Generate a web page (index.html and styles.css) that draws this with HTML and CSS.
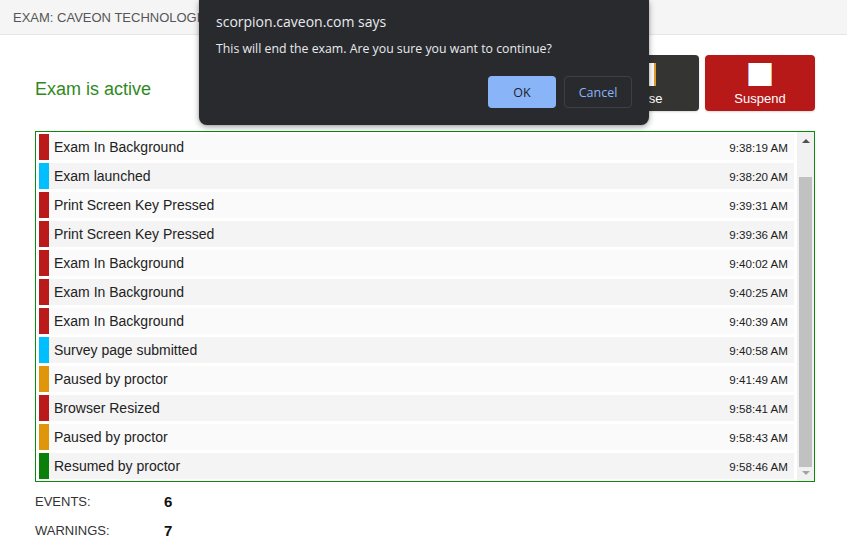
FILE: index.html
```html
<!DOCTYPE html>
<html lang="en">
<head>
<meta charset="utf-8">
<title>Exam monitor</title>
<link rel="stylesheet" href="styles.css">
</head>
<body>
<header class="topbar">
  <span class="exam-title">EXAM: CAVEON TECHNOLOGIES SECURITY EXAM</span>
</header>
<main class="content">
  <div class="status-row">
    <div class="status">Exam is active</div>
    <div class="actions">
      <button class="act act-pause"><span class="act-icon"></span><span class="act-label">Pause</span></button>
      <button class="act act-suspend"><span class="act-icon"></span><span class="act-label">Suspend</span></button>
    </div>
  </div>
  <div class="log">
    <div class="rows">
      <div class="row"><span class="bar red"></span><span class="ev">Exam In Background</span><span class="time">9:38:19 AM</span></div>
      <div class="row"><span class="bar blue"></span><span class="ev">Exam launched</span><span class="time">9:38:20 AM</span></div>
      <div class="row"><span class="bar red"></span><span class="ev">Print Screen Key Pressed</span><span class="time">9:39:31 AM</span></div>
      <div class="row"><span class="bar red"></span><span class="ev">Print Screen Key Pressed</span><span class="time">9:39:36 AM</span></div>
      <div class="row"><span class="bar red"></span><span class="ev">Exam In Background</span><span class="time">9:40:02 AM</span></div>
      <div class="row"><span class="bar red"></span><span class="ev">Exam In Background</span><span class="time">9:40:25 AM</span></div>
      <div class="row"><span class="bar red"></span><span class="ev">Exam In Background</span><span class="time">9:40:39 AM</span></div>
      <div class="row"><span class="bar blue"></span><span class="ev">Survey page submitted</span><span class="time">9:40:58 AM</span></div>
      <div class="row"><span class="bar orange"></span><span class="ev">Paused by proctor</span><span class="time">9:41:49 AM</span></div>
      <div class="row"><span class="bar red"></span><span class="ev">Browser Resized</span><span class="time">9:58:41 AM</span></div>
      <div class="row"><span class="bar orange"></span><span class="ev">Paused by proctor</span><span class="time">9:58:43 AM</span></div>
      <div class="row"><span class="bar green"></span><span class="ev">Resumed by proctor</span><span class="time">9:58:46 AM</span></div>
    </div>
    <div class="scrollbar">
      <span class="arrow arrow-up"></span>
      <div class="track"><div class="thumb"></div></div>
      <span class="arrow arrow-down"></span>
    </div>
  </div>
  <div class="stats">
    <div class="stat"><span class="stat-label">EVENTS:</span><span class="stat-value">6</span></div>
    <div class="stat"><span class="stat-label">WARNINGS:</span><span class="stat-value">7</span></div>
  </div>
</main>
<div class="dialog">
  <div class="dialog-title">scorpion.caveon.com says</div>
  <div class="dialog-msg">This will end the exam. Are you sure you want to continue?</div>
  <div class="dialog-btns">
    <button class="dbtn dbtn-ok">OK</button>
    <button class="dbtn dbtn-cancel">Cancel</button>
  </div>
</div>
</body>
</html>
```
FILE: styles.css
```css
html, body {
  margin: 0;
  padding: 0;
  background: #ffffff;
  font-family: "Liberation Sans", Arial, sans-serif;
  color: #222;
}

.topbar {
  height: 34px;
  background: #f5f5f5;
  border-bottom: 1px solid #e6e6e6;
  display: flex;
  align-items: center;
  padding-left: 13px;
  overflow: hidden;
  white-space: nowrap;
}

.exam-title {
  font-size: 13px;
  color: #555;
}

.content {
  padding: 20px 32px 0 35px;
}

.status-row {
  display: flex;
  align-items: center;
  justify-content: space-between;
  height: 56px;
}

.status {
  font-size: 18px;
  color: #2f8a1d;
  margin-top: 12px;
}

.actions {
  display: flex;
  gap: 6px;
  height: 56px;
}

.act {
  width: 110px;
  height: 56px;
  border: none;
  border-radius: 4px;
  display: flex;
  flex-direction: column;
  align-items: center;
  padding: 8px 0 0;
  color: #fff;
  font-family: "Liberation Sans", Arial, sans-serif;
  font-size: 13px;
  box-shadow: 0 1px 2px rgba(0,0,0,0.15);
}

.act-icon {
  display: block;
  width: 24px;
  height: 23px;
  background: #fff;
  box-sizing: border-box;
}

.act-label {
  display: block;
  margin-top: 5px;
  line-height: 15px;
}

.act-pause {
  background: #343432;
}

.act-pause .act-icon {
  border-right: 2px solid #e09a2a;
}

.act-suspend {
  background: #b71818;
}

.act-suspend .act-icon {
  border-left: 1px solid #b6a0ff;
  border-right: 1px solid #f5b060;
}

.log {
  margin-top: 20px;
  border: 1px solid #0a8a0a;
  height: 349px;
  display: flex;
}

.rows {
  flex: 1;
  padding: 2px 3px 0 3px;
  display: flex;
  flex-direction: column;
  gap: 3px;
}

.row {
  height: 26px;
  display: flex;
  align-items: center;
  background: #fafafa;
}

.row:nth-child(even) {
  background: #f4f4f4;
}

.bar {
  width: 10px;
  align-self: stretch;
}

.bar.red { background: #bb1a1a; }
.bar.blue { background: #00bfff; }
.bar.orange { background: #e0960b; }
.bar.green { background: #0a800a; }

.ev {
  padding-left: 5px;
  font-size: 14px;
  color: #222;
}

.time {
  margin-left: auto;
  padding-right: 6px;
  font-size: 11.6px;
  color: #222;
}

.scrollbar {
  width: 17px;
  background: #f1f1f1;
  display: flex;
  flex-direction: column;
  align-items: center;
}

.arrow {
  display: block;
  width: 0;
  height: 0;
  border-left: 4px solid transparent;
  border-right: 4px solid transparent;
}

.arrow-up {
  margin-top: 7px;
  margin-bottom: 6px;
  border-bottom: 4px solid #505050;
}

.arrow-down {
  margin-top: 4px;
  margin-bottom: 6px;
  border-top: 4px solid #a3a3a3;
}

.track {
  flex: 1;
  width: 100%;
  display: flex;
  flex-direction: column;
  justify-content: flex-end;
  align-items: center;
}

.thumb {
  width: 13px;
  height: 290px;
  background: #c1c1c1;
}

.stats {
  padding-top: 5px;
}

.stat {
  display: flex;
  align-items: center;
  height: 29px;
}

.stat-label {
  width: 129px;
  font-size: 13px;
  color: #333;
}

.stat-value {
  font-size: 15px;
  font-weight: bold;
  color: #111;
}

.dialog {
  position: absolute;
  top: 0;
  left: 199px;
  width: 450px;
  height: 125px;
  box-sizing: border-box;
  background: #292a2d;
  border-radius: 0 0 8px 8px;
  box-shadow: 0 2px 6px rgba(0,0,0,0.35), 0 0 2px rgba(0,0,0,0.2);
  padding: 12px 17px 17px 17px;
  font-family: "Open Sans", "Noto Sans", sans-serif;
  color: #e8eaed;
  display: flex;
  flex-direction: column;
}

.dialog-title {
  font-size: 14px;
  line-height: 20px;
}

.dialog-msg {
  font-size: 12.3px;
  line-height: 18px;
  margin-top: 8px;
}

.dialog-btns {
  margin-top: auto;
  display: flex;
  justify-content: flex-end;
  gap: 8px;
}

.dbtn {
  width: 68px;
  height: 32px;
  border-radius: 4px;
  font-family: "Open Sans", "Noto Sans", sans-serif;
  font-size: 12.5px;
  font-weight: 500;
  padding: 0;
}

.dbtn-ok {
  background: #8ab4f8;
  color: #202124;
  border: none;
}

.dbtn-cancel {
  background: transparent;
  color: #8ab4f8;
  border: 1px solid #3c4043;
}
```
